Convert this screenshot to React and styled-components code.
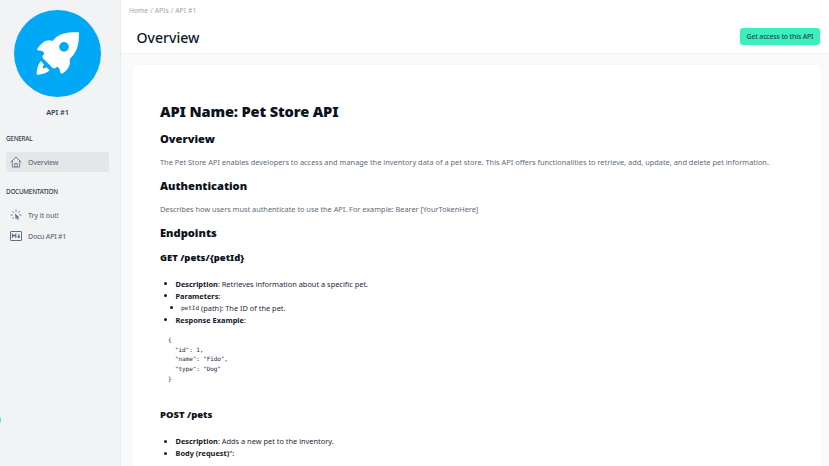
import React from 'react';
import styled, { createGlobalStyle } from 'styled-components';

const Global = createGlobalStyle`
  * { box-sizing: border-box; }
  html, body { margin: 0; height: 100%; overflow: hidden; }
  body { font-family: "Noto Sans", "Open Sans", sans-serif; color: #111827; background: #f8fafc; }
`;

const Page = styled.div`
  display: flex;
  width: 100%;
  height: 100vh;
  overflow: hidden;
`;

const Sidebar = styled.aside`
  position: relative;
  width: 121px;
  flex: none;
  background: #f2f3f5;
  border-right: 1px solid #e9ebee;
  padding: 10px 12px 0 6px;
  display: flex;
  flex-direction: column;
`;

const Logo = styled.div`
  width: 87px;
  height: 87px;
  margin-left: 8px;
  border-radius: 50%;
  background: #00a8f5;
  color: #fff;
  display: flex;
  align-items: center;
  justify-content: center;
`;

const ApiName = styled.div`
  height: 12px;
  line-height: 12px;
  margin: 9px 0 0;
  padding-left: 1px;
  text-align: center;
  font-size: 7.4px;
  font-weight: 600;
  letter-spacing: -0.1px;
  color: #374151;
`;

const GroupTitle = styled.div`
  height: 10px;
  line-height: 10px;
  margin-top: ${(p) => p.$top}px;
  font-size: 6.3px;
  font-weight: 500;
  letter-spacing: ${(p) => p.$track || 0}px;
  color: #374151;
`;

const NavItem = styled.a`
  display: flex;
  align-items: center;
  width: 103px;
  height: 20px;
  margin-top: ${(p) => p.$top}px;
  padding-left: 4px;
  gap: 6px;
  border-radius: 3px;
  background: ${(p) => (p.$active ? '#e4e6ea' : 'transparent')};
  font-size: 7.1px;
  font-weight: 500;
  letter-spacing: ${(p) => p.$track || 0}px;
  color: #6b7280;
  svg { flex: none; color: #64708a; }
`;

const FloatingTab = styled.div`
  position: absolute;
  left: -8px;
  top: 415px;
  width: 9px;
  height: 10px;
  border-radius: 50%;
  background: #3bf0bd;
`;

const Main = styled.main`
  flex: 1;
  min-width: 0;
  display: flex;
  flex-direction: column;
`;

const Header = styled.header`
  flex: none;
  height: 54px;
  background: #fff;
  border-bottom: 1px solid #f1f3f5;
  padding: 5px 9px 0 8px;
`;

const Breadcrumb = styled.nav`
  height: 12px;
  line-height: 12px;
  font-size: 6.7px;
  word-spacing: 0.4px;
  color: #9ca3af;
  white-space: pre;
`;

const TitleRow = styled.div`
  display: flex;
  justify-content: space-between;
  padding-left: 7.5px;
  margin-top: 11px;
`;

const Title = styled.h1`
  margin: 0;
  height: 20px;
  line-height: 20px;
  font-size: 14.1px;
  font-weight: 500;
`;

const AccessButton = styled.button`
  width: 80px;
  height: 17px;
  padding: 0;
  border: 0;
  border-radius: 3px;
  background: #3bf0bd;
  color: #1c4a4e;
  font: 500 6.9px/17px "Noto Sans", sans-serif;
  letter-spacing: -0.16px;
  white-space: nowrap;
`;

const Card = styled.article`
  flex: 1;
  margin: 11px 8px 0 12px;
  padding: 35px 27px 0;
  border-radius: 5px 5px 0 0;
  background: #fff;
  box-shadow: 0 0 2px rgba(15, 23, 42, 0.03);
  overflow: hidden;
  white-space: nowrap;
`;

const Heading = styled.div`
  height: ${(p) => p.$h}px;
  line-height: ${(p) => p.$h}px;
  margin-top: ${(p) => p.$top || 0}px;
  margin-bottom: 0;
  font-size: ${(p) => p.$size}px;
  font-weight: 900;
  letter-spacing: ${(p) => p.$track || 0}px;
  color: #0b1220;
`;

const Paragraph = styled.p`
  height: 12px;
  line-height: 12px;
  margin: ${(p) => p.$top}px 0 0;
  font-size: 7.4px;
  letter-spacing: ${(p) => p.$track || 0}px;
  color: #646b77;
`;

const List = styled.ul`
  list-style: none;
  margin: ${(p) => p.$top || 0}px 0 0;
  padding: 0;
`;

const Item = styled.li`
  display: flex;
  align-items: center;
  height: 11.9px;
  padding-left: ${(p) => (p.$nested ? 10 : 4)}px;
  font-size: 7.4px;
  color: #1f2937;
  white-space: pre;
  &::before {
    content: "";
    width: 3px;
    height: 3px;
    margin-right: ${(p) => (p.$nested ? 8 : 8.5)}px;
    border-radius: 50%;
    background: #111827;
  }
  b { font-weight: 700; color: #111827; }
  code { font: 6px "DejaVu Sans Mono", monospace; }
`;

const Code = styled.pre`
  margin: 9.5px 0 0 8px;
  font: 6px/9.65px "DejaVu Sans Mono", monospace;
  letter-spacing: -0.09px;
  color: #1f2937;
`;

const RocketIcon = () => (
  <svg width="48" height="48" viewBox="0 0 144 144" fill="currentColor">
    <path
      fillRule="evenodd"
      d="M135 7C107 5 82 9 67 21L55 33C46 29 35 32 29 36C19 43 11 53 9 59C11 62 18 61 24 63C28 65 30 68 31 71C26 76 24 80 26 84L56 114C60 117 64 115 69 110C73 112 76 114 77 119C78 126 80 131 84 131C91 127 98 121 103 113C107 107 109 98 107 90C107 88 108 86 110 84C126 69 136 49 135 7ZM90 36A14.5 14.5 0 1 1 90 65A14.5 14.5 0 1 1 90 36Z"
    />
    <path d="M21 93C12 102 8 119 8 131C8 134 9 134 12 134C24 134 37 130 47 121C43 118 40 115 37 112C34 115 30 116 27 115C25 111 27 107 30 104Z" />
  </svg>
);

const HomeIcon = () => (
  <svg width="12" height="12" viewBox="0 0 24 24" fill="none" stroke="currentColor" strokeWidth="1.7" strokeLinejoin="round" strokeLinecap="round">
    <path d="M2 12 12 2l10 10M4.5 10v12h15V10M9.5 22v-7h5v7" />
  </svg>
);

const ClickIcon = () => (
  <svg width="12" height="12" viewBox="0 0 24 24" fill="none" stroke="currentColor" strokeWidth="1.8" strokeLinecap="round">
    <path d="M12 2v3M5 5l1.8 1.8M19 5l-1.8 1.8M2 12h3M19 12h3M5 19l1.8-1.8" />
    <path d="m10 9 1.4 12 2.2-3 2 4.5 1.8-.9-2-4.2 3.6-.4Z" fill="currentColor" stroke="none" />
  </svg>
);

const MarkdownIcon = () => (
  <svg width="12" height="10" viewBox="0 0 24 20" fill="none" stroke="currentColor" strokeWidth="2">
    <rect x="1" y="1" width="22" height="18" rx="1" />
    <path d="M5 14V6.5l3.3 4 3.3-4V14M17.5 6v7M14.8 10.5l2.7 3 2.7-3" strokeWidth="2.2" />
  </svg>
);

const json = `{
  "id": 1,
  "name": "Fido",
  "type": "Dog"
}`;

export default function App() {
  return (
    <Page>
      <Global />
      <Sidebar>
        <Logo><RocketIcon /></Logo>
        <ApiName>API #1</ApiName>
        <GroupTitle $top={16} $track={-0.22}>GENERAL</GroupTitle>
        <NavItem $active $top={8} $track={-0.17}><HomeIcon />Overview</NavItem>
        <GroupTitle $top={15} $track={-0.22}>DOCUMENTATION</GroupTitle>
        <NavItem $top={8} $track={-0.14}><ClickIcon />Try it out!</NavItem>
        <NavItem $top={0.5} $track={-0.3}><MarkdownIcon />Docu API #1</NavItem>
        <FloatingTab />
      </Sidebar>
      <Main>
        <Header>
          <Breadcrumb>Home / APIs / API #1</Breadcrumb>
          <TitleRow>
            <Title>Overview</Title>
            <AccessButton>Get access to this API</AccessButton>
          </TitleRow>
        </Header>
        <Card>
          <Heading as="h1" $h={22} $size={14.6} $track={-0.14}>API Name: Pet Store API</Heading>
          <Heading as="h2" $h={16} $top={9} $size={11.1}>Overview</Heading>
          <Paragraph $top={9}>The Pet Store API enables developers to access and manage the inventory data of a pet store. This API offers functionalities to retrieve, add, update, and delete pet information.</Paragraph>
          <Heading as="h2" $h={16} $top={10} $size={11.1}>Authentication</Heading>
          <Paragraph $top={9} $track={-0.03}>Describes how users must authenticate to use the API. For example: Bearer [YourTokenHere]</Paragraph>
          <Heading as="h2" $h={16} $top={10} $size={11.1}>Endpoints</Heading>
          <Heading as="h3" $h={14} $top={10} $size={9.45}>{'GET /pets/{petId}'}</Heading>
          <List $top={13}>
            <Item><b>Description</b>: Retrieves information about a specific pet.</Item>
            <Item><b>Parameters</b>:</Item>
            <Item $nested><code>petId</code> (path): The ID of the pet.</Item>
            <Item><b>Response Example</b>:</Item>
          </List>
          <Code>{json}</Code>
          <Heading as="h3" $h={14} $top={25} $size={9.45}>POST /pets</Heading>
          <List $top={13}>
            <Item><b>Description</b>: Adds a new pet to the inventory.</Item>
            <Item><b>Body (request)</b>":</Item>
          </List>
        </Card>
      </Main>
    </Page>
  );
}
